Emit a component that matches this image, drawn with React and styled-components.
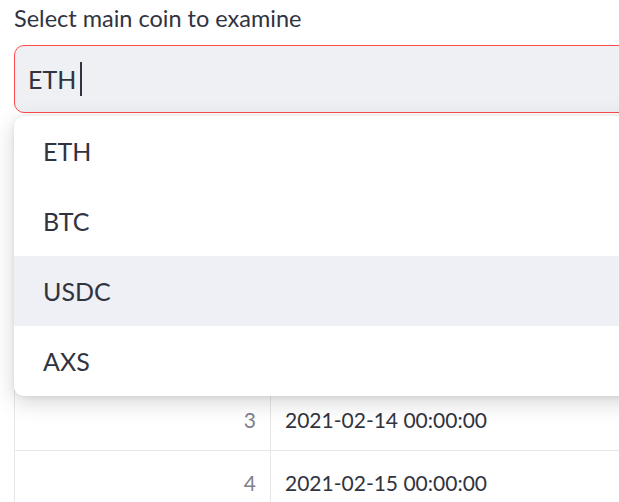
import React from "react";
import styled, { createGlobalStyle } from "styled-components";

const GlobalStyle = createGlobalStyle`
  html, body {
    margin: 0;
    padding: 0;
    background: #ffffff;
    overflow: hidden;
  }
  body {
    font-family: Lato, "Noto Sans", sans-serif;
    color: #31333f;
  }
`;

const Page = styled.div`
  position: relative;
  width: 619px;
  height: 502px;
  overflow: hidden;
  padding: 0 0 0 14px;
  box-sizing: border-box;
`;

const Label = styled.div`
  font-size: 23.5px;
  line-height: 34px;
  height: 34px;
  margin-top: 1px;
`;

const Select = styled.div`
  margin-top: 10px;
  width: 640px;
  height: 68px;
  box-sizing: border-box;
  border: 1px solid #ff4b4b;
  border-radius: 10px;
  background: #eef0f4;
  display: flex;
  align-items: center;
  padding-left: 13px;
  font-size: 25px;
`;

const Caret = styled.span`
  display: inline-block;
  width: 1.5px;
  height: 34px;
  margin-left: 4px;
  background: #31333f;
`;

const Menu = styled.ul`
  position: absolute;
  top: 116px;
  left: 14px;
  width: 640px;
  margin: 0;
  padding: 0;
  list-style: none;
  background: #ffffff;
  border-radius: 10px;
  box-shadow: 0 6px 22px rgba(0, 0, 0, 0.17), 0 1px 5px rgba(0, 0, 0, 0.08);
  overflow: hidden;
  z-index: 2;
`;

const Option = styled.li`
  height: 70px;
  display: flex;
  align-items: center;
  padding-left: 29px;
  font-size: 25px;
  background: ${(p) => (p.active ? "#eff0f5" : "#ffffff")};
`;

const Table = styled.div`
  margin-top: 22px;
  width: 640px;
  border-left: 1px solid #e6e7ea;
  border-top: 1px solid #e6e7ea;
`;

const Row = styled.div`
  display: flex;
  height: 62px;
  border-bottom: 1px solid #e6e7ea;
  font-size: 21px;
`;

const IndexCell = styled.div`
  width: 256px;
  box-sizing: border-box;
  padding-right: 14px;
  border-right: 1px solid #e6e7ea;
  display: flex;
  align-items: center;
  justify-content: flex-end;
  color: #7d7f88;
`;

const Cell = styled.div`
  flex: 1;
  display: flex;
  align-items: center;
  padding-left: 14px;
`;

const options = ["ETH", "BTC", "USDC", "AXS"];
const rows = [
  { i: "", d: "" },
  { i: 0, d: "2021-02-11 00:00:00" },
  { i: 1, d: "2021-02-12 00:00:00" },
  { i: 2, d: "2021-02-13 00:00:00" },
  { i: 3, d: "2021-02-14 00:00:00" },
  { i: 4, d: "2021-02-15 00:00:00" },
];

const App = () => {
  return (
    <Page>
      <GlobalStyle />
      <Label>Select main coin to examine</Label>
      <Select>
        ETH
        <Caret />
      </Select>
      <Menu>
        {options.map((o) => (
          <Option key={o} active={o === "USDC"}>
            {o}
          </Option>
        ))}
      </Menu>
      <Table>
        {rows.map((r, n) => (
          <Row key={n}>
            <IndexCell>{r.i}</IndexCell>
            <Cell>{r.d}</Cell>
          </Row>
        ))}
      </Table>
    </Page>
  );
};

export default App;
